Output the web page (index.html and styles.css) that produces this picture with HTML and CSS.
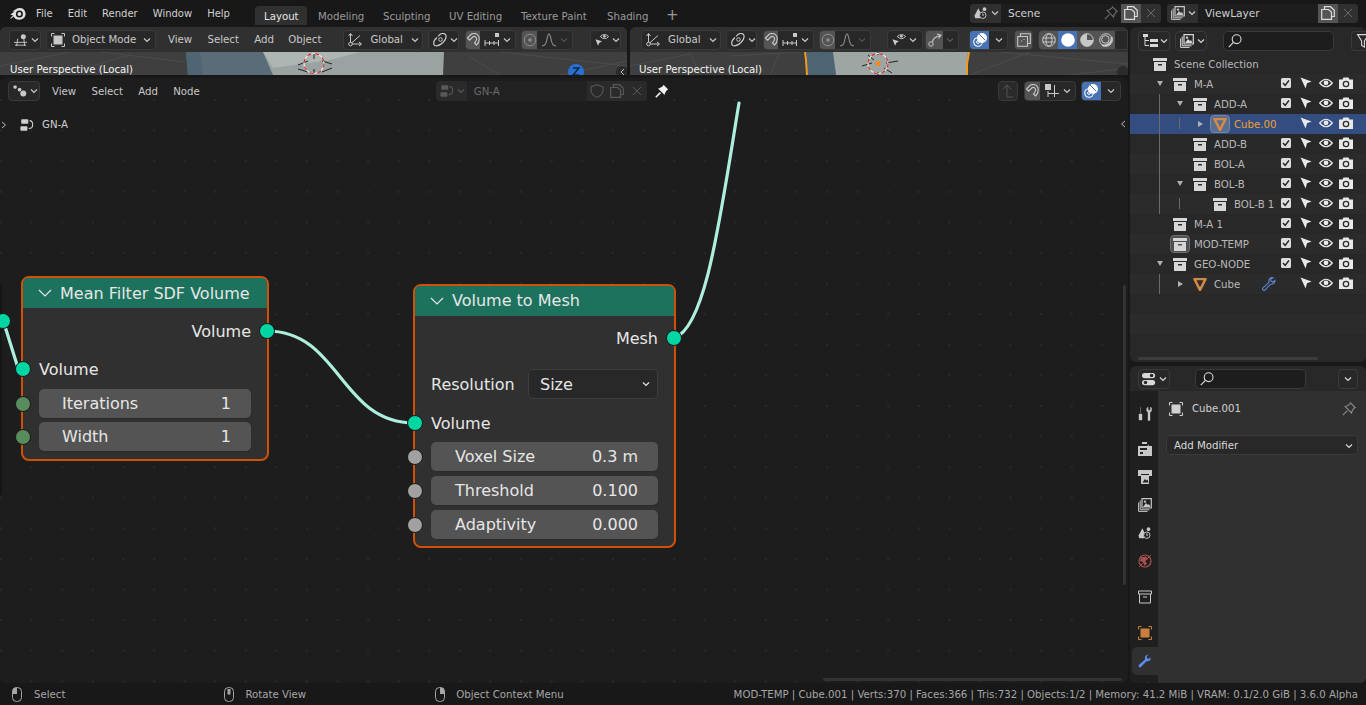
FILE: index.html
```html
<!DOCTYPE html>
<html lang="en">
<head>
<meta charset="utf-8">
<title>Blender Geometry Nodes</title>
<link rel="stylesheet" href="styles.css">
</head>
<body>
<svg class="defs" width="0" height="0" aria-hidden="true">
  <symbol id="chev" viewBox="0 0 8 6"><path d="M1 1.5 4 4.5 7 1.5" fill="none" stroke="currentColor" stroke-width="1.2"/></symbol>
  <symbol id="logo" viewBox="0 0 16 13"><path d="M0.3 7.4 4.6 4.6 2.2 4.5 7.6 1.2Q14.5 0 15.6 6.5 15.6 12 10 12.8 5 13 3.8 9.6L1.2 11.6Q0 12 0.6 10.8L3.2 8.6Z" fill="currentColor"/><circle cx="9.4" cy="7" r="3.5" fill="#181818"/><circle cx="9.4" cy="7" r="1.9" fill="currentColor"/></symbol>
  <symbol id="coll" viewBox="0 0 14 13"><path d="M0 0H14V3H0ZM1 4H13V13H1ZM5 6V7.5H9V6Z" fill="currentColor" fill-rule="evenodd"/></symbol>
  <symbol id="coll-o" viewBox="0 0 14 13"><path d="M0.5 0.5H13.5V3.5H0.5ZM1.5 3.5V12.5H12.5V3.5M5 6.5H9" fill="none" stroke="currentColor"/></symbol>
  <symbol id="check" viewBox="-1 -1 12 12"><rect width="10" height="10" rx="1.5" fill="#dcdcdc"/><path d="M2 5 4.2 7.4 8 2.4" fill="none" stroke="#222" stroke-width="1.5"/></symbol>
  <symbol id="arrow" viewBox="0 0 12 12"><path d="M0.5 0.5 11.5 4.5 7 6.2 5.6 11.5Z" fill="currentColor"/></symbol>
  <symbol id="eye" viewBox="-0.5 -1 15 12"><path d="M0.7 5Q7-2.5 13.3 5 7 12.5 0.7 5Z" fill="none" stroke="currentColor" stroke-width="1.2"/><circle cx="7" cy="4.8" r="2.4" fill="currentColor"/></symbol>
  <symbol id="cam" viewBox="0 0 14 12"><path d="M0 2.5H3.5L4.5 0.5H9.5L10.5 2.5H14V12H0Z" fill="currentColor"/><circle cx="7" cy="7" r="3.3" fill="#2b2b2b"/><circle cx="7" cy="7" r="2" fill="currentColor"/></symbol>
  <symbol id="tri" viewBox="0 0 14 13"><path d="M1.5 1H12.5L7 12Z" fill="none" stroke="currentColor" stroke-width="2.6" stroke-linejoin="round"/></symbol>
  <symbol id="wrench" viewBox="0 0 14 14"><path d="M13 3.4 10.6 5 8.8 4 9 1.8 11 0.8Q8 0 7 3 6.8 4.4 7 5.4L1 10.8Q0 12.5 1.3 13.2 2.5 13.8 3.4 12.6L8.5 7.2Q12.6 7.6 13 3.4Z" fill="currentColor"/></symbol>
  <symbol id="wrench-o" viewBox="0 0 14 14"><path d="M13 3.4 10.6 5 8.8 4 9 1.8 11 0.8Q8 0 7 3 6.8 4.4 7 5.4L1 10.8Q0 12.5 1.3 13.2 2.5 13.8 3.4 12.6L8.5 7.2Q12.6 7.6 13 3.4Z" fill="none" stroke="currentColor" stroke-width="1.1"/></symbol>
  <symbol id="pin" viewBox="0 0 14 14"><path d="M8.5 0.8 13.2 5.5 11.8 6.2 9.8 9.6 9.6 11 3 4.4 4.4 4.2 7.8 2.2ZM5.4 8.6 0.8 13.2" fill="none" stroke="currentColor" stroke-width="1.1"/></symbol>
  <symbol id="pin-f" viewBox="0 0 14 14"><path d="M8.5 0.8 13.2 5.5 11.8 6.2 9.8 9.6 9.6 11 3 4.4 4.4 4.2 7.8 2.2Z" fill="currentColor"/><path d="M5.4 8.6 0.8 13.2" stroke="currentColor" stroke-width="1.6"/></symbol>
  <symbol id="copy" viewBox="0 0 14 14"><path d="M3.5 3V0.7H9.5L13.3 4.2V10.5H10.5M0.7 3.5H7.5L10.5 6V13.3H0.7Z" fill="none" stroke="currentColor" stroke-width="1.2"/></symbol>
  <symbol id="x" viewBox="0 0 10 10"><path d="M1 1 9 9M9 1 1 9" stroke="currentColor" stroke-width="1"/></symbol>
  <symbol id="scene" viewBox="0 0 16 14"><path d="M5 1.5 8.5 9 7 13H1.5L0.5 10Z" fill="currentColor"/><circle cx="12" cy="2.6" r="2.1" fill="currentColor"/><circle cx="10" cy="9.5" r="3.7" fill="#282828" stroke="currentColor" stroke-width="1.1"/><path d="M10 7.5V9.8L11.5 9" fill="none" stroke="currentColor"/></symbol>
  <symbol id="layers" viewBox="0 0 14 14"><path d="M4 0.7H13.3V10H4Z" fill="none" stroke="currentColor" stroke-width="1.2"/><path d="M5 9 8 5 10 7 11 6 12.5 9Z" fill="currentColor"/><circle cx="7" cy="3.6" r="1.2" fill="currentColor"/><path d="M2.2 2.5V11.8H11.5M0.6 4.5V13.4H9.5" fill="none" stroke="currentColor"/></symbol>
  <symbol id="search" viewBox="0 0 14 14"><circle cx="8.6" cy="5.2" r="4.4" fill="none" stroke="currentColor" stroke-width="1.1"/><path d="M5.4 8.4 0.8 13.2" stroke="currentColor" stroke-width="1.2"/></symbol>
  <symbol id="tree" viewBox="0 0 16 14"><path d="M1 0H6V3H1ZM8 5H16V8H8ZM8 10H16V13H8Z" fill="currentColor"/><path d="M3 3V11.5H7M3 6.5H7" fill="none" stroke="currentColor"/></symbol>
  <symbol id="filter" viewBox="0 0 12 14"><path d="M0.6 0.6H11.4L7.4 7V13L4.6 11.4V7Z" fill="none" stroke="currentColor" stroke-width="1.1"/></symbol>
  <symbol id="objmode" viewBox="0 0 14 14"><path d="M3.5 0.5H0.5V3.5M10.5 0.5H13.5V3.5M0.5 10.5V13.5H3.5M13.5 10.5V13.5H10.5" fill="none" stroke="currentColor"/><rect x="2.5" y="2.5" width="9" height="9" fill="currentColor"/></symbol>
  <symbol id="snapgrid" viewBox="0 0 14 14"><rect x="0" y="0" width="6" height="6" fill="currentColor"/><path d="M9.5 1V13M3 9.5H14M3 7V13" fill="none" stroke="currentColor"/></symbol>
  <symbol id="editor3d" viewBox="0 0 15 13"><path d="M0 9H14M1 12H13M4 5 2.8 13M10.5 5 11.5 13" stroke="currentColor" fill="none"/><circle cx="10" cy="3" r="2.7" fill="currentColor"/></symbol>
  <symbol id="editornode" viewBox="0 0 15 13"><rect x="0.5" y="0.5" width="3.5" height="3.5" rx="1.2" fill="currentColor"/><circle cx="7" cy="5" r="2" fill="currentColor"/><circle cx="11" cy="9.2" r="3.2" fill="currentColor"/></symbol>
  <symbol id="global" viewBox="0 0 14 14"><path d="M2.5 11V1M2.5 11H13" stroke="currentColor" fill="none"/><path d="M2.5 11 12 2.5M0.5 3 2.5 0.5 4.5 3M11 9 13.5 11 11 13" stroke="currentColor" fill="none"/><circle cx="2.5" cy="11" r="1.8" fill="#282828" stroke="currentColor"/></symbol>
  <symbol id="link" viewBox="0 0 14 14"><path d="M5 3.5Q9-1.5 12.5 1.5 14.5 5 10 9.5 5 14 1.5 12.5-1 9 4 4.5" fill="none" stroke="currentColor" stroke-width="1.2"/><circle cx="7.5" cy="6.5" r="1.8" fill="none" stroke="currentColor"/></symbol>
  <symbol id="magnet" viewBox="0 0 14 14"><path d="M1.5 5 5.5 1Q11-1 13 4 14 9 10.5 12L8.5 10Q11 7.5 10.5 5 9 2.7 7 3.8L3.6 7.2Z" fill="none" stroke="currentColor" stroke-width="1.1"/></symbol>
  <symbol id="ticks" viewBox="0 0 16 14"><rect x="11" y="0" width="4" height="4" fill="currentColor"/><path d="M1 7V13M1 10H15M5.5 8V12M10 8V12M14.5 7V13" stroke="currentColor" fill="none"/></symbol>
  <symbol id="propdot" viewBox="0 0 14 14"><circle cx="7" cy="7" r="5.8" fill="none" stroke="currentColor"/><circle cx="7" cy="7" r="1.8" fill="currentColor"/></symbol>
  <symbol id="bell" viewBox="0 0 16 14"><path d="M1 13Q5 13 6 6 7 1 8 1 9 1 10 6 11 13 15 13" fill="none" stroke="currentColor" stroke-width="1.1"/></symbol>
  <symbol id="vis" viewBox="0 0 16 14"><path d="M6 3Q11-1.5 15.5 3 11 8 6 3Z" fill="none" stroke="currentColor" stroke-width="1.1"/><circle cx="10.7" cy="2.8" r="1.5" fill="currentColor"/><path d="M0.5 6 8 8.5 5 10 3.5 13.5Z" fill="currentColor"/></symbol>
  <symbol id="overlay" viewBox="0 0 14 14"><circle cx="9" cy="5" r="5" fill="currentColor"/><circle cx="5" cy="9" r="4.3" fill="none" stroke="currentColor" stroke-width="1.1"/><circle cx="5" cy="9" r="1.4" fill="none" stroke="currentColor"/><path d="M6 1 12 7" stroke="#4772b3" stroke-width="1"/></symbol>
  <symbol id="gizmo" viewBox="0 0 14 14"><circle cx="3" cy="11" r="2.2" fill="none" stroke="currentColor"/><path d="M4.5 9Q5 4 12.5 2.5M9 1 13 2.3 10.5 5.5" fill="none" stroke="currentColor" stroke-width="1.1"/></symbol>
  <symbol id="xray" viewBox="0 0 14 14"><path d="M3.5 3V0.7H13.3V10.5H11M0.7 3.5H10.5V13.3H0.7Z" fill="none" stroke="currentColor" stroke-width="1.1"/><path d="M4 8H5M7 6V7" stroke="currentColor"/></symbol>
  <symbol id="wire" viewBox="0 0 14 14"><circle cx="7" cy="7" r="6.3" fill="none" stroke="currentColor"/><ellipse cx="7" cy="7" rx="3" ry="6.3" fill="none" stroke="currentColor"/><path d="M0.7 5H13.3M0.7 9H13.3" stroke="currentColor"/></symbol>
  <symbol id="solid" viewBox="0 0 14 14"><circle cx="7" cy="7" r="6.8" fill="currentColor"/></symbol>
  <symbol id="matprev" viewBox="0 0 14 14"><circle cx="7" cy="7" r="6.3" fill="none" stroke="currentColor"/><path d="M7 0.7A6.3 6.3 0 1 0 13.3 7H7Z" fill="currentColor"/></symbol>
  <symbol id="rendered" viewBox="0 0 14 14"><circle cx="7" cy="7" r="6.3" fill="none" stroke="currentColor"/><circle cx="6.4" cy="6.4" r="3.8" fill="none" stroke="currentColor"/><path d="M3 12A7 7 0 0 0 12.5 4" fill="none" stroke="currentColor" stroke-width="2"/></symbol>
  <symbol id="nodetree" viewBox="0 0 16 14"><path d="M2 1H9V5H2ZM1 9H8V13H1Z" fill="currentColor" stroke="currentColor" stroke-linejoin="round"/><path d="M11 2Q14.5 2 14.5 7 14.5 11 10 11" fill="none" stroke="currentColor" stroke-width="1.2"/></symbol>
  <symbol id="shield" viewBox="0 0 14 14"><path d="M7 0.8 13 2.8V7Q12 11.5 7 13.3 2 11.5 1 7V2.8Z" fill="none" stroke="currentColor" stroke-width="1.1"/></symbol>
  <symbol id="up" viewBox="0 0 14 14"><path d="M6 13H12M6 13V1M2 5 6 1 10 5" fill="none" stroke="currentColor"/></symbol>
  <symbol id="props" viewBox="0 0 16 14"><rect x="0" y="0" width="15" height="6" rx="3" fill="currentColor"/><rect x="0" y="8" width="15" height="6" rx="3" fill="currentColor"/><circle cx="11" cy="3" r="2" fill="#282828"/><circle cx="4" cy="11" r="2" fill="#282828"/></symbol>
  <symbol id="tool" viewBox="0 0 14 14"><path d="M2.5 0V6M1 7H4V13H1ZM12.5 0V3L10.8 3.5 10 2V0Q8 1.5 8.8 4L10 5.5V13.5H12V5.5Q14.5 4 13.5 1Z" fill="currentColor" stroke="currentColor" stroke-width=".4"/></symbol>
  <symbol id="render" viewBox="0 0 14 14"><path d="M0 4H9.5L11 2.5V4H14V14H0Z" fill="currentColor"/><path d="M2 6H9V8H2ZM2 10H5V12H2Z" fill="#232323"/><path d="M4 0H9V2H4Z" fill="currentColor"/></symbol>
  <symbol id="output" viewBox="0 0 14 14"><path d="M0 0H14V6H11V4H3V6H0ZM3 5H11V14H3Z" fill="currentColor" fill-rule="evenodd"/><path d="M4.5 12.5 7 9 8.5 10.5 9.5 9.5 10.5 12.5Z" fill="#232323"/></symbol>
  <symbol id="world" viewBox="0 0 14 14"><circle cx="7" cy="7" r="6" fill="none" stroke="currentColor" stroke-width="1.2"/><path d="M3 3.5 8 2.5 10 5 7 7 9 9.5 6.5 12 5 8 2 7Z" fill="currentColor"/><path d="M1 13 13 1" stroke="currentColor"/></symbol>
  <symbol id="mouse-l" viewBox="0 0 10 15"><rect x="0.5" y="0.5" width="9" height="14" rx="4" fill="none" stroke="currentColor"/><path d="M5 0.5H4.5Q0.5 0.5 0.5 4.5V7H5Z" fill="currentColor"/></symbol>
  <symbol id="mouse-m" viewBox="0 0 10 15"><rect x="0.5" y="0.5" width="9" height="14" rx="4" fill="none" stroke="currentColor"/><rect x="3.5" y="2" width="3" height="5.5" fill="currentColor"/></symbol>
  <symbol id="mouse-r" viewBox="0 0 10 15"><rect x="0.5" y="0.5" width="9" height="14" rx="4" fill="none" stroke="currentColor"/><path d="M5 0.5H5.5Q9.5 0.5 9.5 4.5V7H5Z" fill="currentColor"/></symbol>
</svg>

<div class="app">
  <header class="topbar">
    <svg class="i-logo"><use href="#logo"/></svg>
    <nav class="menu">
      <span>File</span><span>Edit</span><span>Render</span><span>Window</span><span>Help</span>
    </nav>
    <nav class="tabs">
      <span class="tab active">Layout</span><span class="tab">Modeling</span><span class="tab">Sculpting</span><span class="tab">UV Editing</span><span class="tab">Texture Paint</span><span class="tab">Shading</span><span class="tab plus">+</span>
    </nav>
    <div class="selector scene-sel">
      <span class="sel-type"><svg class="i14"><use href="#scene"/></svg><svg class="i-chev"><use href="#chev"/></svg></span>
      <span class="sel-name">Scene</span>
      <span class="sel-pin"><svg class="i14"><use href="#pin"/></svg></span>
      <span class="sel-copy"><svg class="i14"><use href="#copy"/></svg></span>
      <span class="sel-x"><svg class="i10"><use href="#x"/></svg></span>
    </div>
    <div class="selector layer-sel">
      <span class="sel-type"><svg class="i14"><use href="#layers"/></svg><svg class="i-chev"><use href="#chev"/></svg></span>
      <span class="sel-name">ViewLayer</span>
      <span class="sel-copy"><svg class="i14"><use href="#copy"/></svg></span>
      <span class="sel-x"><svg class="i10"><use href="#x"/></svg></span>
    </div>
  </header>

  <main class="workspace">
    <div class="col-left">
      <div class="viewports">
        <section class="viewport vp-a">
          <div class="vhead">
            <span class="btn b-type"><svg class="i14"><use href="#editor3d"/></svg><svg class="i-chev"><use href="#chev"/></svg></span>
            <span class="btn b-mode"><svg class="i14"><use href="#objmode"/></svg><span class="grow">Object Mode</span><svg class="i-chev"><use href="#chev"/></svg></span>
            <span class="vmenu"><span>View</span><span>Select</span><span>Add</span><span>Object</span></span>
            <span class="btn b-global"><svg class="i14"><use href="#global"/></svg><span class="grow">Global</span><svg class="i-chev"><use href="#chev"/></svg></span>
            <span class="btn b-link"><svg class="i14"><use href="#link"/></svg><svg class="i-chev"><use href="#chev"/></svg></span>
            <span class="btn b-snap"><span class="seg on"><svg class="i14"><use href="#magnet"/></svg></span><svg class="i14 t"><use href="#ticks"/></svg><svg class="i-chev"><use href="#chev"/></svg></span>
            <span class="btn b-prop dim"><span class="seg on"><svg class="i14"><use href="#propdot"/></svg></span><svg class="i14 t"><use href="#bell"/></svg><svg class="i-chev"><use href="#chev"/></svg></span>
            <span class="btn b-vis"><svg class="i14"><use href="#vis"/></svg><svg class="i-chev"><use href="#chev"/></svg></span>
          </div>
          <div class="vbody">
            <svg class="scene3d" viewBox="0 0 627 23" preserveAspectRatio="none">
              <path d="M0 14 70 0M60 23 130 3M500 23 470 5M560 23 627 9M500 0 627 14M100 0 186 10" stroke="#4c4c4c" fill="none"/>
              <path d="M186 0H272L275 23H188Z" fill="#5a6c78"/>
              <path d="M186 0H200L203 23H188Z" fill="#4f6574"/>
              <path d="M263 0H444L443 23H273Z" fill="#9aa3a1"/>
              <path d="M263 0H360L330 8 273 16Z" fill="#adb6b3"/>
              <g fill="none" stroke="#222"><path d="M298 13 308 9M322 9 332 12M298 17 308 20M322 20 332 16M314 2V7M314 17V22"/></g>
              <circle cx="314" cy="11.5" r="10" fill="none" stroke="#e8e8e8" stroke-width="1.2"/>
              <circle cx="314" cy="11.5" r="10" fill="none" stroke="#d03030" stroke-width="1.2" stroke-dasharray="4 4"/>
              <circle cx="576" cy="20" r="8" fill="#2a70d0"/>
              <circle cx="622" cy="20" r="6" fill="#2b2b2b"/>
              <path d="M624 17 621 20 624 23" stroke="#bbb" fill="none"/>
              <path d="M573 16H579L573 23H579" stroke="#12243e" stroke-width="1.4" fill="none"/>
            </svg>
            <span class="vlabel">User Perspective (Local)</span>
          </div>
        </section>
        <section class="viewport vp-b">
          <div class="vhead">
            <span class="btn b-global b-first"><svg class="i14"><use href="#global"/></svg><span class="grow">Global</span><svg class="i-chev"><use href="#chev"/></svg></span>
            <span class="btn b-link"><svg class="i14"><use href="#link"/></svg><svg class="i-chev"><use href="#chev"/></svg></span>
            <span class="btn b-snap"><span class="seg on"><svg class="i14"><use href="#magnet"/></svg></span><svg class="i14 t"><use href="#ticks"/></svg><svg class="i-chev"><use href="#chev"/></svg></span>
            <span class="btn b-prop dim"><span class="seg on"><svg class="i14"><use href="#propdot"/></svg></span><svg class="i14 t"><use href="#bell"/></svg><svg class="i-chev"><use href="#chev"/></svg></span>
            <span class="btn b-vis b-vis2"><svg class="i14"><use href="#vis"/></svg><svg class="i-chev"><use href="#chev"/></svg></span>
            <span class="btn b-gizmo"><span class="seg on"><svg class="i14"><use href="#gizmo"/></svg></span><svg class="i-chev faint"><use href="#chev"/></svg></span>
            <span class="btn b-over"><span class="seg blue"><svg class="i14"><use href="#overlay"/></svg></span><svg class="i-chev"><use href="#chev"/></svg></span>
            <span class="btn b-xray"><svg class="i14"><use href="#xray"/></svg></span>
            <span class="btn b-shade"><span class="seg on"><svg class="i14"><use href="#wire"/></svg></span><span class="seg blue-lit"><svg class="i14"><use href="#solid"/></svg></span><span class="seg on"><svg class="i14"><use href="#matprev"/></svg></span><span class="seg on"><svg class="i14"><use href="#rendered"/></svg></span></span>
          </div>
          <div class="vbody">
            <svg class="scene3d" viewBox="0 0 498 23" preserveAspectRatio="none">
              <path d="M0 14 60 2M60 0 70 23M150 0 140 23M100 4 170 0M340 23 400 0M370 0 498 12M440 23 498 16" stroke="#4c4c4c" fill="none"/>
              <path d="M176 0H204L206 23H177Z" fill="#4d6473"/>
              <path d="M203 0H338L336 23H206Z" fill="#9ea6a3"/>
              <path d="M175 0 176 8 177 23" stroke="#f29a1e" stroke-width="2" fill="none"/>
              <path d="M339 0 337 12 337 23" stroke="#f29a1e" stroke-width="2" fill="none"/>
              <g fill="none" stroke="#222"><path d="M232 14 242 11M256 11 268 9M238 3 244 8M254 16 262 21M248 0V3M248 20V23"/></g>
              <circle cx="248" cy="11.5" r="10" fill="none" stroke="#e8e8e8" stroke-width="1.2"/>
              <circle cx="248" cy="11.5" r="10" fill="none" stroke="#d03030" stroke-width="1.2" stroke-dasharray="4 4"/>
              <circle cx="248" cy="11.5" r="2.5" fill="#f08a1a"/>
              <circle cx="493" cy="20" r="6" fill="#2b2b2b"/>
            </svg>
            <span class="vlabel">User Perspective (Local)</span>
          </div>
        </section>
      </div>

      <section class="nodeeditor">
        <div class="nhead">
          <span class="btn b-ntype"><svg class="i14"><use href="#editornode"/></svg><svg class="i-chev"><use href="#chev"/></svg></span>
          <span class="vmenu nmenu"><span>View</span><span>Select</span><span>Add</span><span>Node</span></span>
          <span class="idsel">
            <span class="id-type"><svg class="i14"><use href="#nodetree"/></svg><svg class="i-chev"><use href="#chev"/></svg></span>
            <span class="id-name">GN-A</span>
            <span class="id-ic"><svg class="i14"><use href="#shield"/></svg></span>
            <span class="id-ic"><svg class="i14"><use href="#copy"/></svg></span>
            <span class="id-ic"><svg class="i10"><use href="#x"/></svg></span>
          </span>
          <svg class="i14 n-pin"><use href="#pin-f"/></svg>
          <span class="btn b-up"><svg class="i14"><use href="#up"/></svg></span>
          <span class="btn b-nsnap"><span class="seg on"><svg class="i14"><use href="#magnet"/></svg></span><svg class="i14 t"><use href="#snapgrid"/></svg><svg class="i-chev"><use href="#chev"/></svg></span>
          <span class="btn b-nover"><span class="seg blue"><svg class="i14"><use href="#overlay"/></svg></span><svg class="i-chev"><use href="#chev"/></svg></span>
        </div>
        <div class="crumb">
          <svg class="crumb-exp" viewBox="0 0 6 8"><path d="M1 1 4.5 4 1 7" fill="none" stroke="currentColor"/></svg>
          <svg class="i14"><use href="#nodetree"/></svg>
          <span>GN-A</span>
        </div>
        <svg class="crumb-side" viewBox="0 0 6 8"><path d="M5 1 1.5 4 5 7" fill="none" stroke="currentColor"/></svg>

        <svg class="wires" viewBox="0 0 1128 605">
          <path class="w" d="M3 242 18 290"/>
          <path class="w" d="M267 253C340 253 340 345 414 345"/>
          <path class="w" d="M674 260C706 250 720 140 739 25"/>
        </svg>
        <div class="edge-node"></div>
        <span class="sock teal s-in0"></span>

        <article class="node n-mean">
          <h3 class="nd-head"><svg class="nd-chev" viewBox="0 0 14 8"><path d="M1 1 7 7 13 1" fill="none" stroke="currentColor" stroke-width="1.2"/></svg><span>Mean Filter SDF Volume</span></h3>
          <div class="nd-body">
            <div class="nd-row out">Volume<span class="sock teal s-r"></span></div>
            <div class="nd-row in v1">Volume<span class="sock teal s-l"></span></div>
            <div class="field f1"><span>Iterations</span><span>1</span><span class="sock green s-lf"></span></div>
            <div class="field f1"><span>Width</span><span>1</span><span class="sock green s-lf"></span></div>
          </div>
        </article>

        <article class="node n-vtm">
          <h3 class="nd-head"><svg class="nd-chev" viewBox="0 0 14 8"><path d="M1 1 7 7 13 1" fill="none" stroke="currentColor" stroke-width="1.2"/></svg><span>Volume to Mesh</span></h3>
          <div class="nd-body">
            <div class="nd-row out">Mesh<span class="sock teal s-r"></span></div>
            <div class="nd-res"><span>Resolution</span><span class="drop"><span>Size</span><svg class="i-chev"><use href="#chev"/></svg></span></div>
            <div class="nd-row in v2">Volume<span class="sock teal s-l"></span></div>
            <div class="field f2"><span>Voxel Size</span><span>0.3 m</span><span class="sock gray s-lf"></span></div>
            <div class="field f2"><span>Threshold</span><span>0.100</span><span class="sock gray s-lf"></span></div>
            <div class="field f2"><span>Adaptivity</span><span>0.000</span><span class="sock gray s-lf"></span></div>
          </div>
        </article>
        <span class="vscroll"></span>
        <span class="hscroll"></span>
      </section>
    </div>

    <div class="col-right">
      <section class="outliner">
        <div class="ohead">
          <span class="btn o-type"><svg class="i16"><use href="#tree"/></svg><svg class="i-chev"><use href="#chev"/></svg></span>
          <span class="btn o-mode"><svg class="i14"><use href="#layers"/></svg><svg class="i-chev"><use href="#chev"/></svg></span>
          <span class="search o-search"><svg class="i14"><use href="#search"/></svg></span>
          <span class="btn o-filter"><svg class="i14"><use href="#filter"/></svg></span>
        </div>
        <div class="rows">
          <div class="row l0"><i class="exp"></i><svg class="ic-coll"><use href="#coll"/></svg><span class="lbl">Scene Collection</span></div>
          <div class="row l1 alt"><i class="exp open"></i><svg class="ic-coll"><use href="#coll"/></svg><span class="lbl">M-A</span>
            <span class="rest"><svg><use href="#check"/></svg><svg><use href="#arrow"/></svg><svg><use href="#eye"/></svg><svg><use href="#cam"/></svg></span></div>
          <div class="row l2"><i class="exp open"></i><svg class="ic-coll"><use href="#coll"/></svg><span class="lbl">ADD-A</span>
            <span class="rest"><svg><use href="#check"/></svg><svg><use href="#arrow"/></svg><svg><use href="#eye"/></svg><svg><use href="#cam"/></svg></span><i class="vl v1"></i></div>
          <div class="row l3 sel"><i class="exp closed"></i><span class="hl-ic"><svg class="ic-tri"><use href="#tri"/></svg></span><span class="lbl act">Cube.00</span>
            <span class="rest"><i class="sp"></i><svg><use href="#arrow"/></svg><svg><use href="#eye"/></svg><svg><use href="#cam"/></svg></span><i class="vl v1"></i><i class="vl v2"></i></div>
          <div class="row l2"><i class="exp"></i><svg class="ic-coll"><use href="#coll"/></svg><span class="lbl">ADD-B</span>
            <span class="rest"><svg><use href="#check"/></svg><svg><use href="#arrow"/></svg><svg><use href="#eye"/></svg><svg><use href="#cam"/></svg></span><i class="vl v1"></i></div>
          <div class="row l2 alt"><i class="exp"></i><svg class="ic-coll"><use href="#coll"/></svg><span class="lbl">BOL-A</span>
            <span class="rest"><svg><use href="#check"/></svg><svg><use href="#arrow"/></svg><svg><use href="#eye"/></svg><svg><use href="#cam"/></svg></span><i class="vl v1"></i></div>
          <div class="row l2"><i class="exp open"></i><svg class="ic-coll"><use href="#coll"/></svg><span class="lbl">BOL-B</span>
            <span class="rest"><svg><use href="#check"/></svg><svg><use href="#arrow"/></svg><svg><use href="#eye"/></svg><svg><use href="#cam"/></svg></span><i class="vl v1"></i></div>
          <div class="row l3 alt"><i class="exp"></i><svg class="ic-coll"><use href="#coll"/></svg><span class="lbl">BOL-B 1</span>
            <span class="rest"><svg><use href="#check"/></svg><svg><use href="#arrow"/></svg><svg><use href="#eye"/></svg><svg><use href="#cam"/></svg></span><i class="vl v1"></i><i class="vl v2"></i></div>
          <div class="row l1"><i class="exp"></i><svg class="ic-coll"><use href="#coll"/></svg><span class="lbl">M-A 1</span>
            <span class="rest"><svg><use href="#check"/></svg><svg><use href="#arrow"/></svg><svg><use href="#eye"/></svg><svg><use href="#cam"/></svg></span></div>
          <div class="row l1 alt"><i class="exp"></i><span class="hl-coll"><svg class="ic-coll"><use href="#coll"/></svg></span><span class="lbl">MOD-TEMP</span>
            <span class="rest"><svg><use href="#check"/></svg><svg><use href="#arrow"/></svg><svg><use href="#eye"/></svg><svg><use href="#cam"/></svg></span></div>
          <div class="row l1"><i class="exp open"></i><svg class="ic-coll"><use href="#coll"/></svg><span class="lbl">GEO-NODE</span>
            <span class="rest"><svg><use href="#check"/></svg><svg><use href="#arrow"/></svg><svg><use href="#eye"/></svg><svg><use href="#cam"/></svg></span></div>
          <div class="row l2 alt"><i class="exp closed"></i><svg class="ic-tri plain"><use href="#tri"/></svg><span class="lbl">Cube</span><svg class="ic-mod"><use href="#wrench-o"/></svg>
            <span class="rest"><i class="sp"></i><svg><use href="#arrow"/></svg><svg><use href="#eye"/></svg><svg><use href="#cam"/></svg></span><i class="vl v1"></i></div>
          <div class="row"></div>
          <div class="row alt"></div>
        </div>
        <span class="oscroll"></span>
      </section>

      <section class="properties">
        <div class="phead">
          <span class="btn p-type"><svg class="i14"><use href="#props"/></svg><svg class="i-chev"><use href="#chev"/></svg></span>
          <span class="search p-search"><svg class="i14"><use href="#search"/></svg></span>
          <span class="btn p-more"><svg class="i-chev"><use href="#chev"/></svg></span>
        </div>
        <div class="pbody">
          <aside class="ptabs">
            <span class="ptab first"><svg class="i14"><use href="#tool"/></svg></span>
            <span class="ptab gap"><svg class="i14"><use href="#render"/></svg></span>
            <span class="ptab"><svg class="i14"><use href="#output"/></svg></span>
            <span class="ptab"><svg class="i14"><use href="#layers"/></svg></span>
            <span class="ptab"><svg class="i14"><use href="#scene"/></svg></span>
            <span class="ptab worldt"><svg class="i14"><use href="#world"/></svg></span>
            <span class="ptab gap"><svg class="i14"><use href="#coll-o"/></svg></span>
            <span class="ptab gap objt"><svg class="i14"><use href="#objmode"/></svg></span>
            <span class="ptab act-tab"><svg class="i14"><use href="#wrench"/></svg></span>
            <span class="ptab phys"><svg class="i14"><use href="#gizmo"/></svg></span>
          </aside>
          <div class="pcontent">
            <div class="pobj"><svg class="i14"><use href="#objmode"/></svg><span class="grow">Cube.001</span><svg class="i14 dimi"><use href="#pin"/></svg></div>
            <div class="addmod"><span>Add Modifier</span><svg class="i-chev"><use href="#chev"/></svg></div>
          </div>
        </div>
      </section>
    </div>
  </main>

  <footer class="status">
    <span class="key k1"><svg class="i-mouse"><use href="#mouse-l"/></svg><span>Select</span></span>
    <span class="key k2"><svg class="i-mouse"><use href="#mouse-m"/></svg><span>Rotate View</span></span>
    <span class="key k3"><svg class="i-mouse"><use href="#mouse-r"/></svg><span>Object Context Menu</span></span>
    <span class="stats">MOD-TEMP | Cube.001 | Verts:370 | Faces:366 | Tris:732 | Objects:1/2 | Memory: 41.2 MiB | VRAM: 0.1/2.0 GiB | 3.6.0 Alpha</span>
  </footer>
</div>
</body>
</html>
```

FILE: styles.css
```css
* { box-sizing: border-box; }
html, body { margin: 0; height: 100%; overflow: hidden; }
body { background: #181818; color: #c8c8c8; font: 10.2px/1 "DejaVu Sans", sans-serif; }
.defs { position: absolute; }
svg { display: block; flex: none; }
.i14 { width: 14px; height: 14px; }
.i16 { width: 16px; height: 14px; }
.i10 { width: 10px; height: 10px; }
.i-chev { width: 8px; height: 6px; }
.grow { flex: 1; padding-top: 1px; }

.app { display: grid; grid-template-rows: 27px 656px 22px; width: 1366px; height: 705px; }

/* top bar */
.topbar { display: flex; align-items: center; position: relative; padding-left: 10px; color: #d0d0d0; }
.i-logo { width: 16px; height: 13px; color: #e0e0e0; margin-top: -1px; }
.menu { display: flex; gap: 15px; margin-left: 10px; font-size: 10px; }
.tabs { display: flex; align-self: flex-start; margin: 6px 0 0 25px; height: 19px; }
.tab { padding: 6px 0 0 9px; width: 63px; color: #9a9a9a; }
.tab.active { width: 52px; background: #303030; color: #e6e6e6; border-radius: 4px 4px 0 0; margin-right: 2px; }
.tab:nth-child(2) { width: 65px; padding-left: 0; margin-left: 9px; }
.tab:nth-child(3) { width: 66px; padding-left: 0; }
.tab:nth-child(4) { width: 72px; padding-left: 0; }
.tab:nth-child(5) { width: 86px; padding-left: 0; }
.tab:nth-child(6) { width: 59px; padding-left: 0; }
.tab.plus { width: 14px; padding: 2px 0 0; font-size: 15px; }
.selector { display: flex; height: 19px; background: #282828; border-radius: 4px; align-items: center; margin-top: -1px; overflow: hidden; color: #cfcfcf; }
.scene-sel { width: 191px; margin-left: auto; }
.layer-sel { width: 191px; margin-left: 6px; margin-right: 8px; }
.sel-type { display: flex; align-items: center; gap: 3px; width: 31px; height: 100%; padding-left: 4px; background: #303030; color: #c8c8c8; }
.sel-name { flex: 1; padding-left: 7px; background: #1d1d1d; height: 100%; display: flex; align-items: center; font-size: 10.6px; }
.sel-pin { width: 20px; height: 100%; display: flex; align-items: center; justify-content: center; color: #6a6a6a; background: #1d1d1d; }
.sel-copy { width: 20px; height: 100%; display: flex; align-items: center; justify-content: center; background: #545454; color: #dcdcdc; }
.sel-x { width: 20px; height: 100%; display: flex; align-items: center; justify-content: center; background: #303030; color: #6a6a6a; }

/* workspace */
.workspace { display: grid; grid-template-columns: 1128px 236px; grid-template-rows: 656px; column-gap: 2px; height: 656px; min-height: 0; }
.col-left { display: flex; flex-direction: column; gap: 3px; min-width: 0; min-height: 0; }
.col-right { display: flex; flex-direction: column; gap: 4px; min-height: 0; }
.viewports { display: flex; gap: 3px; height: 48px; flex: none; }
.viewport { background: #3f3f3f; border-radius: 6px 6px 0 0; overflow: hidden; display: flex; flex-direction: column; }
.vp-a { width: 627px; }
.vp-b { width: 498px; }
.vhead { height: 25px; background: #303030; display: flex; align-items: center; flex: none; color: #c8c8c8; }
.vbody { flex: 1; position: relative; }
.scene3d { position: absolute; inset: 0; width: 100%; height: 100%; }
.vlabel { position: absolute; left: 10px; top: 13px; color: #f4f4f4; font-size: 10.2px; white-space: nowrap; }
.vp-b .vlabel { left: 9px; }

.btn { display: flex; align-items: center; height: 20px; background: #282828; border: 1px solid #3a3a3a; border-radius: 4px; padding: 0 4px; gap: 3px; overflow: hidden; flex: none; white-space: nowrap; }
.seg { display: flex; align-items: center; justify-content: center; height: 100%; }
.seg.on { background: #545454; }
.seg.blue { background: #4772b3; color: #fff; }
.seg.blue-lit { background: #4772b3; color: #fff; }
.t { width: 16px; }
.b-type { width: 32px; margin-left: 9px; }
.b-mode { width: 110px; margin-left: 5px; gap: 7px; }
.vmenu { display: flex; gap: 15.3px; margin-left: 12px; padding-top: 1px; flex: none; }
.vmenu span:nth-child(4) { margin-left: -1px; }
.b-global { width: 80px; margin-left: 22px; gap: 8px; }
.b-first { margin-left: 11px; }
.b-link { width: 31px; margin-left: 5px; }
.b-snap { width: 51px; margin-left: 6px; padding: 0 4px 0 0; }
.b-snap .seg, .b-prop .seg, .b-nsnap .seg { width: 19px; margin-right: 1px; }
.b-prop { width: 52px; margin-left: 5px; padding: 0 4px 0 0; }
.dim .seg, .dim { color: #8f8f8f; }
.dim .i-chev { opacity: .4; }
.b-vis { width: 31px; margin-left: 17px; }
.b-vis2 { width: 36px; margin-left: 16px; }
.b-gizmo { width: 34px; margin-left: 2px; padding: 0 4px 0 0; }
.b-gizmo .seg { width: 19px; }
.faint { opacity: .3; }
.b-over { width: 39px; margin-left: 10px; padding: 0 4px 0 0; gap: 6px; }
.b-over .seg, .b-nover .seg { width: 19px; }
.b-xray { width: 19px; margin-left: 6px; padding: 0 2px; background: #545454; }
.b-shade { width: 90px; margin-left: 5px; padding: 0; gap: 0; border-radius: 4px 0 0 4px; }
.b-shade .seg { width: 19px; }

/* node editor */
.nodeeditor { position: relative; flex: 1; min-height: 0; border-radius: 6px; overflow: hidden; background-color: #1d1d1d;
  background-image: radial-gradient(circle at 1px 1px, #2a2a2a 1px, transparent 1.3px);
  background-size: 30.6px 30.6px; background-position: 0 21px; }
.nhead { display: flex; align-items: center; height: 26px; position: relative; z-index: 3; color: #c8c8c8; }
.b-ntype { width: 32px; margin-left: 8px; background: #282828; }
.nmenu { margin-left: 12px; padding-top: 2px; }
.nmenu span:nth-child(4) { margin-left: 0; }
.idsel { display: flex; align-items: center; flex: none; height: 20px; width: 211px; margin-left: 236px; border-radius: 4px; overflow: hidden; color: #5a5a5a; background: #2a2a2a; }
.id-type { display: flex; gap: 3px; align-items: center; width: 31px; padding-left: 4px; height: 100%; }
.id-name { flex: 1; padding: 2px 0 0 7px; height: 100%; display: flex; align-items: center; background: #222; color: #6a6a6a; }
.id-ic { width: 20px; height: 100%; display: flex; align-items: center; justify-content: center; background: #2a2a2a; }
.n-pin { color: #f0f0f0; margin-left: 8px; }
.b-up { width: 20px; margin-left: 329px; color: #555; background: #2a2a2a; padding: 0 2px; }
.b-nsnap { width: 52px; margin-left: 6px; padding: 0 4px 0 0; }
.b-nover { width: 40px; margin-left: 5px; padding: 0 4px 0 0; gap: 6px; }
.crumb { display: flex; align-items: center; gap: 6px; margin-top: 13px; height: 16px; position: relative; z-index: 3; color: #d0d0d0; }
.crumb svg:nth-child(2) { margin-left: 7px; margin-right: 2px; }
.crumb-exp { width: 6px; height: 8px; margin-left: 1px; color: #bbb; }
.crumb-side { position: absolute; left: 1120px; top: 42px; width: 6px; height: 8px; color: #bbb; z-index: 3; }
.wires { position: absolute; inset: 0; width: 1128px; height: 605px; z-index: 1; }
.w { fill: none; stroke: #aeeedd; stroke-width: 3.2; stroke-linecap: round; }
.edge-node { position: absolute; left: 0; top: 205px; width: 2px; height: 212px; background: #151515; }

.node { position: absolute; z-index: 2; background: #303030; border: 2px solid #cf5107; border-radius: 8px; color: #e6e6e6; font-size: 16px; display: flex; flex-direction: column; }
.n-mean { left: 21px; top: 198px; width: 248px; height: 185px; }
.n-vtm { left: 413px; top: 206px; width: 263px; height: 264px; }
.nd-head { margin: 0; height: 30px; background: #1d725e; border-radius: 5px 5px 0 0; font-weight: normal; font-size: inherit; display: flex; align-items: center; padding-left: 15px; gap: 8px; flex: none; }
.nd-head span { padding-top: 2px; }
.n-vtm .nd-head span { padding-top: 0; }
.nd-chev { width: 14px; height: 8px; }
.nd-body { position: relative; padding: 0 16px; flex: 1; }
.nd-row { position: relative; display: flex; align-items: center; height: 20px; padding-top: 2px; }
.nd-row.out { justify-content: flex-end; margin-top: 13px; }
.n-vtm .nd-row.out { margin-top: 12px; }
.nd-row.in.v1 { margin-top: 18px; margin-bottom: 10px; }
.nd-row.in.v2 { margin-top: 14px; margin-bottom: 9px; }
.sock { position: absolute; border-radius: 50%; border: 1px solid #1a1a1a; width: 16px; height: 16px; }
.teal { background: #00d6a3; }
.green { background: #598c5c; }
.gray { background: #a1a1a1; }
.s-r { right: -24px; top: 2px; }
.s-l { left: -24px; top: 2px; }
.s-lf { left: -24px; top: 6.5px; }
.s-in0 { position: absolute; left: -5px; top: 234.5px; z-index: 2; }
.field { position: relative; display: flex; justify-content: space-between; align-items: center; background: #545454; border-radius: 5px; padding: 0 20px 0 23px; margin-bottom: 4px; box-shadow: 0 1px 1px #2a2a2a; }
.f1 { height: 29px; }
.f2 { height: 29px; margin-bottom: 5px; padding-left: 24px; }
.nd-res { display: flex; align-items: center; justify-content: space-between; margin-top: 21px; height: 30px; }
.nd-res > span:first-child, .drop > span { padding-top: 2px; }
.drop { display: flex; align-items: center; justify-content: space-between; width: 130px; height: 30px; background: #282828; border: 1px solid #3d3d3d; border-radius: 5px; padding: 0 7px 0 11px; }
.vscroll { position: absolute; right: 2px; top: 207px; width: 3px; height: 300px; border-radius: 2px; background: #333; z-index: 1; }
.hscroll { position: absolute; left: 823px; bottom: 2px; width: 299px; height: 3px; border-radius: 2px; background: #333; z-index: 1; }

/* outliner */
.outliner { position: relative; height: 335px; flex: none; background: #282828; border-radius: 6px; overflow: hidden; }
.ohead { display: flex; align-items: center; height: 27px; color: #d8d8d8; }
.o-type { width: 32px; margin-left: 8px; background: #282828; padding: 0 3px; gap: 2px; }
.o-mode { width: 32px; margin-left: 5px; }
.search { display: flex; align-items: center; flex: none; background: #1d1d1d; border: 1px solid #3a3a3a; border-radius: 5px; height: 20px; padding-left: 4px; color: #d8d8d8; }
.o-search { width: 111px; margin-left: 16px; }
.o-filter { width: 30px; margin-left: 17px; padding: 0 4px; border-right: 0; }
.rows { display: flex; flex-direction: column; }
.row { position: relative; display: flex; align-items: center; height: 20px; background: #282828; color: #b8b8b8; }
.row.alt { background: #2b2b2b; }
.row.sel { background: #334d80; }
.l1 { padding-left: 20px; }
.l2 { padding-left: 40px; }
.l3 { padding-left: 60px; }
.exp { width: 20px; height: 20px; flex: none; position: relative; }
.exp.open::after { content: ""; position: absolute; left: 7px; top: 7px; border-style: solid; border-width: 5px 3.5px 0; border-color: #b0b0b0 transparent transparent; }
.exp.closed::after { content: ""; position: absolute; left: 8px; top: 6.5px; border-style: solid; border-width: 3.5px 0 3.5px 5px; border-color: transparent transparent transparent #b0b0b0; }
.ic-coll { width: 14px; height: 13px; margin: 0 3px; color: #d6d6d6; }
.ic-tri { width: 14px; height: 13px; color: #d28b46; }
.ic-tri.plain { margin: 0 3px; }
.hl-ic, .hl-coll { width: 20px; height: 18px; display: flex; align-items: center; justify-content: center; flex: none; border-radius: 4px; background: #5a6d8f; border: 1px solid #7387a8; }
.hl-coll { background: #505050; border-color: #6e6e6e; }
.hl-coll .ic-coll { margin: 0; }
.lbl { margin-left: 4px; padding-top: 2px; white-space: nowrap; }
.lbl.act { color: #f0a030; }
.ic-mod { position: absolute; left: 132px; top: 3px; width: 14px; height: 14px; color: #5c88d8; }
.rest { position: absolute; left: 146px; top: -1px; display: flex; height: 20px; align-items: center; color: #e8e8e8; }
.rest svg, .rest .sp { width: 20px; height: 12px; }
.vl { position: absolute; top: 0; width: 1px; height: 20px; background: #6a6a6a; }
.vl.v1 { left: 29px; }
.vl.v2 { left: 49px; top: 4px; height: 11px; }
.oscroll { position: absolute; left: 8px; bottom: 2px; width: 180px; height: 3px; background: #3c3c3c; border-radius: 2px; }

/* properties */
.properties { flex: 1; min-height: 0; background: #282828; border-radius: 6px; overflow: hidden; display: flex; flex-direction: column; }
.phead { display: flex; align-items: center; height: 25px; flex: none; color: #d8d8d8; }
.p-type { width: 32px; margin-left: 8px; padding: 0 3px; }
.p-search { width: 111px; margin-left: 25px; }
.p-more { width: 20px; margin-left: 32px; justify-content: center; padding: 0; }
.pbody { flex: 1; display: flex; min-height: 0; }
.ptabs { width: 28px; background: #1f1f1f; display: flex; flex-direction: column; align-items: flex-end; padding-top: 10px; color: #c8c8c8; overflow: hidden; }
.ptab { width: 26px; height: 28px; flex: none; display: flex; align-items: center; padding-left: 6px; }
.ptab.gap { margin-top: 8px; }
.ptab.first { height: 26px; }
.worldt { color: #a85050; }
.objt { color: #c9803f; }
.act-tab { background: #303030; color: #5c8cee; border-radius: 5px 0 0 5px; }
.phys { color: #5c8cee; }
.pcontent { flex: 1; background: #303030; padding: 0 8px; }
.pobj { display: flex; align-items: center; gap: 9px; height: 34px; padding: 2px 2px 0 3px; color: #d0d0d0; }
.dimi { color: #8a8a8a; }
.addmod { display: flex; align-items: center; justify-content: space-between; height: 20px; margin-top: 10px; background: #282828; border: 1px solid #3a3a3a; border-radius: 4px; padding: 2px 4px 0 7px; color: #d8d8d8; }

/* status */
.status { display: flex; align-items: center; height: 22px; color: #a6a6a6; }
.key { display: flex; align-items: center; gap: 11px; }
.key span, .stats { padding-top: 3px; }
.i-mouse { width: 10px; height: 15px; }
.k1 { margin-left: 12px; gap: 12px; }
.k2 { margin-left: 159px; }
.k3 { margin-left: 129px; }
.stats { margin-left: auto; margin-right: 8px; white-space: nowrap; }
```
